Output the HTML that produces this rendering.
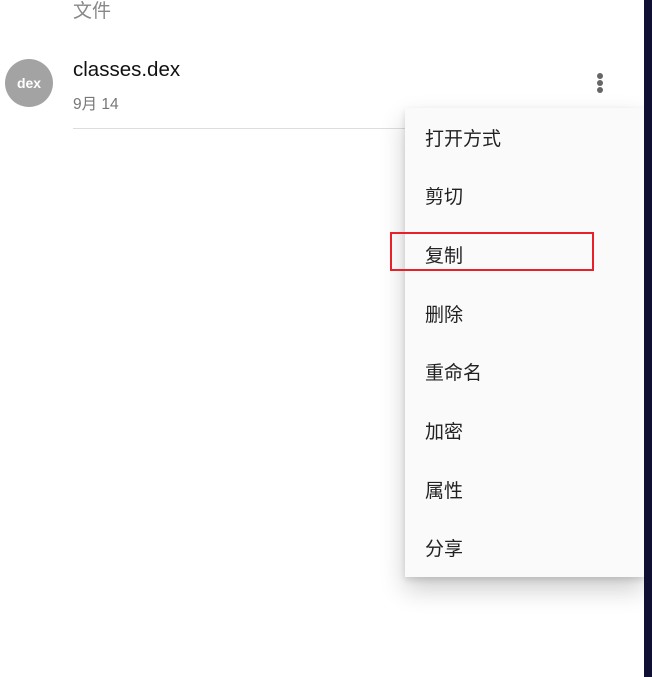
<!DOCTYPE html>
<html><head><meta charset="utf-8"><style>
body{margin:0;width:652px;height:677px;background:#fff;position:relative;overflow:hidden;font-family:"Liberation Sans","Noto Sans CJK SC",sans-serif}
.a{position:absolute}
.strip{left:644px;top:0;width:8px;height:677px;background:#0f1033}
.menu{left:405px;top:108px;width:239px;height:469px;background:#fafafa;box-shadow:0 12px 24px rgba(0,0,0,.2),0 3px 6px rgba(0,0,0,.12)}
.it{position:absolute;left:20px;font-size:19px;color:#222;line-height:24px}
.dot{position:absolute;left:597px;width:6px;height:6px;border-radius:50%;background:#666}
</style></head><body>
<div class="a" style="left:73px;top:-4px;font-size:19px;color:#888">文件</div>
<div class="a" style="left:5px;top:59px;width:48px;height:48px;border-radius:50%;background:#a3a3a3;color:#fff;font-weight:bold;font-size:14px;line-height:48px;text-align:center">dex</div>
<div class="a" style="left:73px;top:58px;font-size:20.5px;color:#111">classes.dex</div>
<div class="a" style="left:73px;top:92px;font-size:15.5px;color:#777">9月 14</div>
<div class="a" style="left:73px;top:128px;width:340px;height:1px;background:#ddd"></div>
<div class="dot" style="top:73px"></div><div class="dot" style="top:80px"></div><div class="dot" style="top:87px"></div>
<div class="a menu">
<div class="it" style="top:20px">打开方式</div>
<div class="it" style="top:78px">剪切</div>
<div class="it" style="top:137px">复制</div>
<div class="it" style="top:196px">删除</div>
<div class="it" style="top:254px">重命名</div>
<div class="it" style="top:313px">加密</div>
<div class="it" style="top:372px">属性</div>
<div class="it" style="top:430px">分享</div>
</div>
<div class="a" style="left:390px;top:232px;width:200px;height:35px;border:2px solid #e8202a"></div>
<div class="a strip"></div>
</body></html>
